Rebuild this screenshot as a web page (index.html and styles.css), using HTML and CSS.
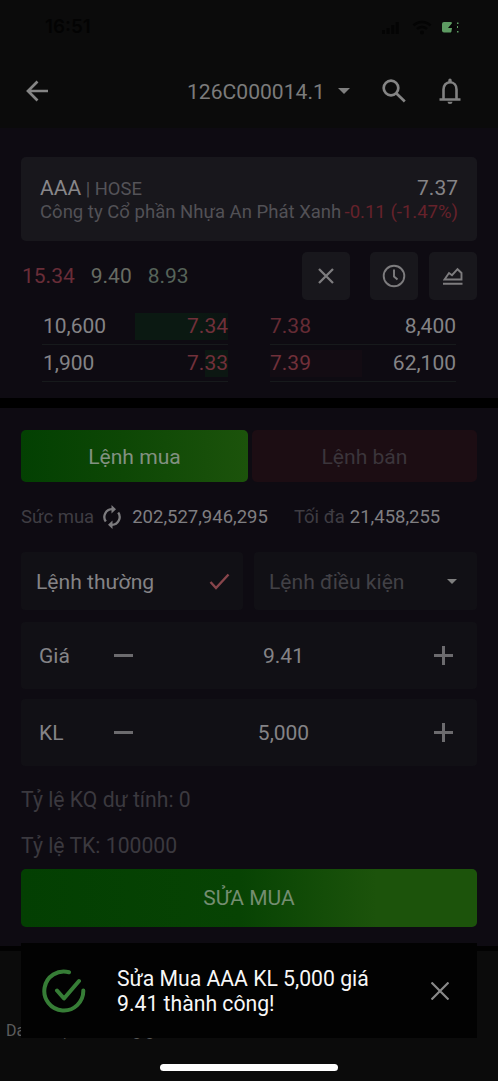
FILE: index.html
```html
<!DOCTYPE html>
<html lang="vi">
<head>
<meta charset="utf-8">
<title>Sửa lệnh</title>
<link rel="stylesheet" href="styles.css">
</head>
<body>
<div class="phone">
  <div class="status">
    <span class="clock">16:51</span>
    <svg class="signal" width="17" height="13" viewBox="0 0 17 13"><path d="M0 9h3v4H0zM4.6 7h3v6h-3zM9.2 4h3v9h-3zM13.8 1h3v12h-3z"/></svg>
    <svg class="wifi" width="20" height="15" viewBox="0 0 20 15"><path d="M1.5 5.5a12 12 0 0 1 17 0M5 9a7 7 0 0 1 10 0"/><circle cx="10" cy="12.5" r="2"/></svg>
    <svg class="battery" width="20" height="14" viewBox="0 0 20 14"><rect class="charge" x="1" y="2" width="10.500" height="10.500" rx="2"/><path class="bolt" d="M12 2 7 8h4l-1 6 6-8h-4l2-4z"/><path class="charge" d="M16 2.500h1.500v1.500H16zM16 6h1v2h-1zM16 11h1.500v1.500H16z"/></svg>
  </div>
  <header class="topbar">
    <svg class="icon back" width="22" height="22" viewBox="0 0 22 22"><path d="M11.500 1.500 2 11l9.500 9.500M2 11h20"/></svg>
    <span class="account">126C000014.1</span>
    <svg class="caret" width="12" height="6" viewBox="0 0 12 6"><path d="M0 0h12L6 6z"/></svg>
    <svg class="icon search" width="24" height="24" viewBox="0 0 24 24"><circle cx="9" cy="9" r="7.300"/><path d="m14.500 14.500 8.300 8"/></svg>
    <svg class="bell" width="22" height="26" viewBox="0 0 22 26"><path class="stroke" d="M4.500 21V11.500C4.500 7.500 7 4.300 11 4.300s6.500 3.200 6.500 7.200V21M.5 21.500h21"/><path class="fill" d="M9.300 4V2.200a1.700 1.700 0 0 1 3.400 0V4zM8.500 23.800h5a2.500 2.200 0 0 1-5 0z"/></svg>
  </header>

  <section class="quote">
    <div class="stock">
      <div class="line top"><span><b>AAA</b> <i>| HOSE</i></span><span class="price">7.37</span></div>
      <div class="line"><span class="company">Công ty Cổ phần Nhựa An Phát Xanh</span><span class="change">-0.11 (-1.47%)</span></div>
    </div>
    <div class="tools">
      <div class="limits"><span class="ceil">15.34</span><span class="ref">9.40</span><span class="floor">8.93</span></div>
      <div class="tool"><svg width="16" height="16" viewBox="0 0 16 16"><path d="m1 1 14 14M15 1 1 15"/></svg></div>
      <div class="tool clockbtn"><svg width="24" height="24" viewBox="0 0 24 24"><circle cx="12" cy="12" r="10.300"/><path d="M12 5.500v7l3.500 3"/></svg></div>
      <div class="tool chart"><svg width="20" height="19" viewBox="0 0 20 19"><path d="M1.500 12.500 6 6l3 2.200 5.500-6L18.500 6v6.500zM0 16.800h19.500"/></svg></div>
    </div>
    <div class="book">
      <div class="side">
        <div class="level"><span class="qty">10,600</span><span class="depth d1">7.34</span></div>
        <div class="level"><span class="qty">1,900</span><span class="depth d2">7.33</span></div>
      </div>
      <div class="side">
        <div class="level"><span class="down">7.38</span><span>8,400</span></div>
        <div class="level"><span class="depth sell">7.39</span><span>62,100</span></div>
      </div>
    </div>
  </section>

  <section class="order">
    <div class="tabs"><div class="tab buy">Lệnh mua</div><div class="tab sellt">Lệnh bán</div></div>
    <div class="power">
      <span class="dim">Sức mua</span>
      <svg width="20" height="24" viewBox="0 0 20 24"><path class="arc" d="M10 4.200a7.800 7.800 0 0 0-6.200 12.300M10 19.800a7.800 7.800 0 0 0 6.200-12.300"/><path class="tip" d="M9.500 0v8.400l4.500-4.200zM10.500 24v-8.400L6 19.800z"/></svg>
      <span class="num">202,527,946,295</span>
      <span class="dim max">Tối đa</span>
      <span class="num">21,458,255</span>
    </div>
    <div class="kinds">
      <div class="kind"><span>Lệnh thường</span><svg class="tick" width="21" height="17" viewBox="0 0 21 17"><path d="m1.500 9 5.500 6L19.500 1.500"/></svg></div>
      <div class="kind off"><span>Lệnh điều kiện</span><svg class="caret" width="10" height="5" viewBox="0 0 10 5"><path d="M0 0h10L5 5z"/></svg></div>
    </div>
    <div class="step">
      <label>Giá</label><span class="minus"></span><span class="value">9.41</span><span class="plus"></span>
    </div>
    <div class="step">
      <label>KL</label><span class="minus"></span><span class="value">5,000</span><span class="plus"></span>
    </div>
    <div class="ratio">Tỷ lệ KQ dự tính: 0</div>
    <div class="ratio">Tỷ lệ TK: 100000</div>
    <div class="submit">SỬA MUA</div>
  </section>

  <footer class="nav">
    <div class="links"><span>Danh mục</span><span>Bảng giá</span></div>
    <div class="home"></div>
  </footer>

  <div class="toast">
    <svg class="ok" width="44" height="44" viewBox="0 0 44 44"><path d="M27 3.200A19.500 19.500 0 1 0 41.300 21.500M15 21.500l7 8L37 12"/></svg>
    <p>Sửa Mua AAA KL 5,000 giá<br>9.41 thành công!</p>
    <svg class="close" width="18" height="18" viewBox="0 0 18 18"><path d="m.5.500 17 17M17.500.500l-17 17"/></svg>
  </div>
</div>
</body>
</html>
```
FILE: styles.css
```css
* { box-sizing: border-box; }
body { margin: 0; background: #0b0b0b; }
svg { display: block; flex: none; fill: none; }

.phone {
  position: relative;
  display: flex;
  flex-direction: column;
  width: 498px;
  height: 1081px;
  overflow: hidden;
  background: #0b0b0b;
  color: #848386;
  font: 21px/1 Roboto, "Liberation Sans", sans-serif;
  white-space: nowrap;
}

.status { display: flex; align-items: center; height: 54px; padding: 0 37px 0 45px; }
.clock { flex: 1; padding-top: 1px; color: #030303; font: 600 18.8px/1 Inter, Roboto, sans-serif; }
.signal { fill: #040404; margin-right: 13px; }
.wifi { margin-right: 9px; stroke: #040404; stroke-width: 2.5; }
.wifi circle { fill: #040404; stroke: none; }
.charge { fill: #5d9b62; }
.bolt { fill: #050505; }

.topbar { display: flex; align-items: center; height: 74px; padding: 0 37px 0 26px; }
.icon { stroke: #858585; stroke-width: 2.7; }
.account { margin-left: 139px; width: 150px; padding-top: 1px; color: #7b7b7b; font-size: 21.1px; }
.caret { fill: #7f7f7f; }
.topbar .caret { margin-left: 1px; }
.search { margin-left: 32px; }
.bell { margin-left: auto; }
.bell .stroke { stroke: #818181; stroke-width: 2.6; }
.bell .fill { fill: #818181; }

.quote { height: 280px; padding: 29px 21px 0; background: #0e0b12; border-bottom: 10px solid #000; }
.stock { height: 84px; padding: 19px 19px 0; border-radius: 5px; background: #18171c; }
.line { display: flex; justify-content: space-between; align-items: center; height: 24px; font-size: 18.4px; }
.line b { color: #88878a; font-weight: 400; font-size: 21px; }
.line i { color: #545358; font-style: normal; }
.price { padding-top: 1px; color: #858487; font-size: 21px; }
.company { color: #525156; font-size: 18.55px; }
.change { color: #66222b; font-size: 18.55px; }

.tools { display: flex; align-items: center; height: 48px; margin-top: 11px; }
.limits { display: flex; flex: 1; gap: 16px; padding-left: 1px; font-size: 21px; }
.ceil { color: #692d38; }
.ref { color: #676b63; }
.floor { color: #566359; }
.tool { display: grid; place-items: center; width: 48px; height: 48px; border-radius: 5px; background: #18171c; }
.tool svg { stroke: #7d7c7e; stroke-width: 2.3; }
.clockbtn { margin-left: 20px; }
.clockbtn svg, .chart svg { stroke-width: 1.9; }
.chart { margin-left: 11px; }

.book { display: flex; gap: 42px; margin-top: 8px; padding: 0 21px 0 21px; }
.side { flex: 1; }
.level { display: flex; justify-content: space-between; align-items: center; height: 37px; border-bottom: 1px solid #171a1c; }
.qty { padding-left: 1px; }
.depth { display: flex; align-items: center; height: 27px; color: #71303a; }
.d1 { justify-content: flex-end; width: 93px; background: linear-gradient(90deg, #0b1912 0 65%, #0c1312); }
.d2 { background: linear-gradient(90deg, transparent 45%, #0c1712 45%); }
.down { color: #652b35; }
.sell { width: 92px; background: #130c13; }

.order { height: 543px; padding: 22px 21px 0; background: #0e0b12; border-bottom: 5px solid #020202; }
.tabs { display: flex; gap: 4px; height: 52px; }
.tab { flex: 1; display: grid; place-items: center; border-radius: 5px; padding-top: 1px; font-size: 21.1px; }
.buy { flex: none; width: 227px; background: linear-gradient(90deg, #034002, #0d4705 45%, #1c530b); color: #829181; }
.sellt { background: #1c0d13; color: #3b353b; }

.power { display: flex; align-items: center; height: 70px; font-size: 18.5px; }
.dim { color: #3f3d43; }
.power svg { margin: 0 10px 0 8px; }
.arc { stroke: #7c7b7e; stroke-width: 2.3; }
.tip { fill: #7c7b7e; }
.num { color: #7f7e81; }
.max { margin: 0 5px 0 26px; }

.kinds { display: flex; gap: 11px; height: 58px; }
.kind { flex: 1; display: flex; align-items: center; justify-content: space-between; padding: 1px 13px 0 15px; border-radius: 4px; background: #111015; font-size: 21.1px; }
.tick { stroke: #88454b; stroke-width: 2.4; }
.off { flex: none; width: 223px; padding-right: 20px; color: #424146; }

.step { display: flex; align-items: center; height: 67px; margin-top: 12px; padding: 0 24px 0 18px; border-radius: 4px; background: #111015; }
.step + .step { margin-top: 10px; }
.step label { width: 75px; padding-top: 1px; }
.minus { width: 19px; height: 3px; background: #6c6b6e; }
.value { flex: 1; padding-top: 1px; text-align: center; }
.plus { width: 19px; height: 19px; background: linear-gradient(#6c6b6e, #6c6b6e) center / 19px 3px no-repeat, linear-gradient(#6c6b6e, #6c6b6e) center / 3px 19px no-repeat; }

.ratio { display: flex; align-items: center; height: 46px; color: #3b393f; font-size: 21.2px; }
.step + .ratio { margin-top: 11px; }
.submit { display: grid; place-items: center; height: 58px; padding-top: 1px; border-radius: 5px; background: linear-gradient(90deg, #033f02, #074303 48%, #1c530b 78%); color: #748d71; }

.nav { flex: 1; padding: 70px 0 0 6px; }
.links { display: flex; gap: 27px; height: 20px; align-items: center; color: #5d5d5d; font-size: 16px; }
.home { width: 178px; height: 7px; margin: 23px 0 0 154px; border-radius: 4px; background: #fff; }

.toast { position: absolute; left: 21px; top: 943px; display: flex; align-items: center; width: 456px; height: 95px; padding: 0 28px 0 21px; background: #020202; }
.ok { stroke: #367d36; stroke-width: 4; stroke-linecap: round; stroke-linejoin: round; }
.toast p { flex: 1; margin: 0 0 0 31px; color: #f7f7f7; font-size: 21.2px; line-height: 25px; }
.close { stroke: #888; stroke-width: 2.2; }
```
